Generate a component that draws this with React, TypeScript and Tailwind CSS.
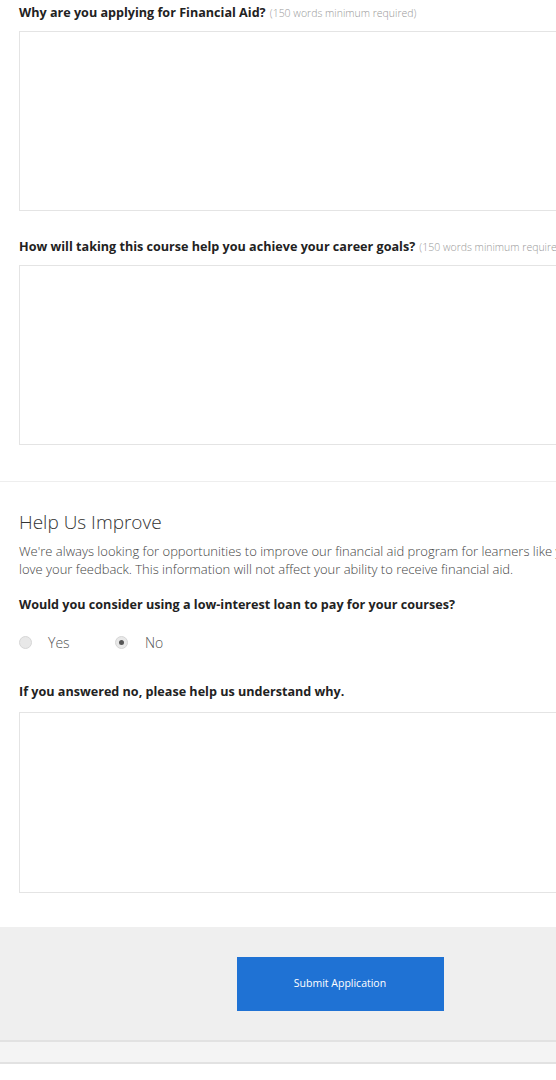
export default function App() {
  return (
    <div className="w-[556px] overflow-hidden bg-white font-['Open_Sans',sans-serif] text-[#333]">
      <div className="w-[680px]">
        <section className="px-[19px] pt-[2px] pb-[36px]">
          <Question label="Why are you applying for Financial Aid?" hint="(150 words minimum required)" />
          <div className="h-[25px]" />
          <Question label="How will taking this course help you achieve your career goals?" hint="(150 words minimum required)" />
        </section>

        <div className="border-t border-[#eee]" />

        <section className="px-[19px] pt-[27px] pb-[34px]">
          <h2 className="text-[19px] font-light leading-[26px] text-[#333]">Help Us Improve</h2>
          <p className="mt-[7px] whitespace-nowrap text-[13px] font-light leading-[18px] text-[#444]">
            We're always looking for opportunities to improve our financial aid program for learners like you, and we'd
            <br />
            love your feedback. This information will not affect your ability to receive financial aid.
          </p>
          <div className="mt-[18px] text-[12.6px] font-bold leading-[18px] text-[#222]">
            Would you consider using a low-interest loan to pay for your courses?
          </div>
          <div className="mt-[18px] flex h-[20px] items-center text-[14px] font-light text-[#555]">
            <Radio checked={false} />
            <span className="ml-[16px] w-[67px]">Yes</span>
            <Radio checked />
            <span className="ml-[17px]">No</span>
          </div>
          <div className="mt-[31px] text-[12.6px] font-bold leading-[18px] text-[#222]">
            If you answered no, please help us understand why.
          </div>
          <textarea className="mt-[11px] block h-[181px] w-full resize-none border border-[#e4e4e4] bg-white" />
        </section>

        <div className="flex h-[113px] items-center justify-center bg-[#efefef]">
          <button className="h-[54px] w-[207px] bg-[#1f72d4] text-[10.5px] text-white">Submit Application</button>
        </div>
        <div className="h-[24px] border-y-2 border-[#e2e2e2] bg-[#f4f4f4]" />
        <div className="h-[16px]" />
      </div>
    </div>
  );
}

function Question({ label, hint }: { label: string; hint: string }) {
  return (
    <div>
      <div className="whitespace-nowrap leading-[18px]">
        <span className="text-[12.6px] font-bold text-[#222]">{label}</span>{" "}
        <span className="text-[10.5px] font-light text-[#999]">{hint}</span>
      </div>
      <textarea className="mt-[9px] block h-[180px] w-full resize-none border border-[#e4e4e4] bg-white" />
    </div>
  );
}

function Radio({ checked }: { checked: boolean }) {
  return (
    <span className="flex h-[13px] w-[13px] items-center justify-center rounded-full border border-[#d6d6d6] bg-[#e8e8e8]">
      {checked && <span className="h-[5px] w-[5px] rounded-full bg-[#555]" />}
    </span>
  );
}
